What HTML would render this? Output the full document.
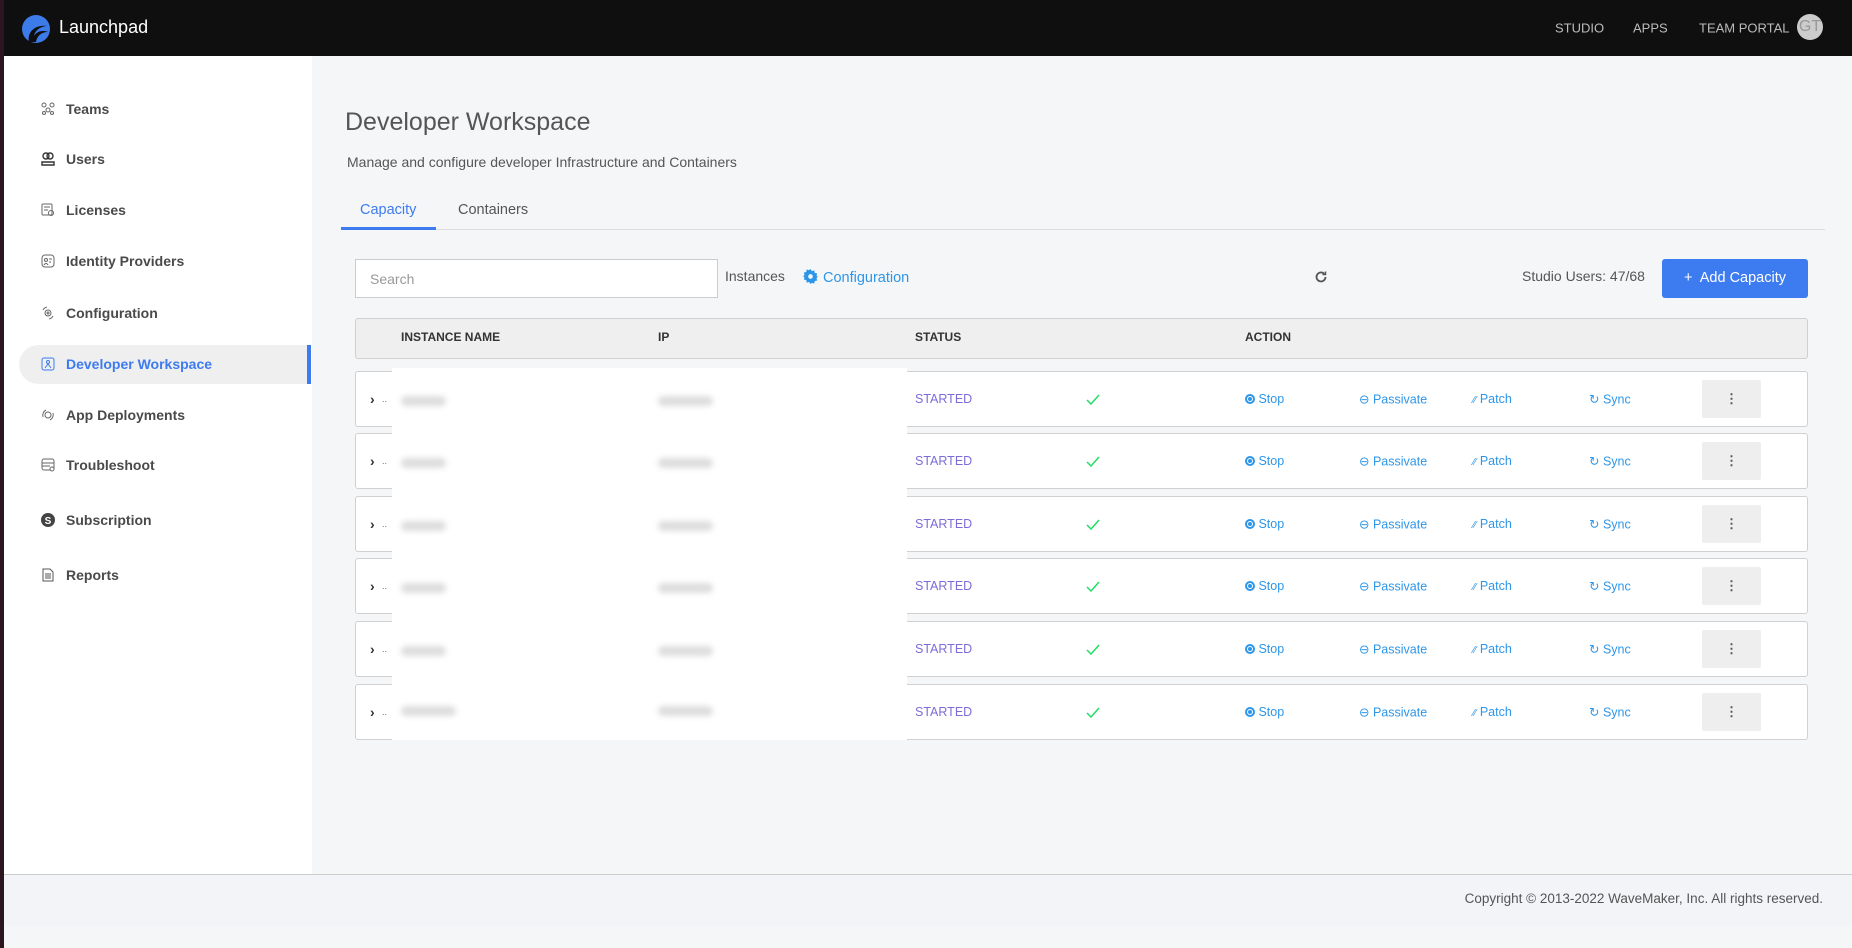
<!DOCTYPE html>
<html><head><meta charset="utf-8"><style>
*{box-sizing:border-box;margin:0;padding:0}
body{width:1852px;height:948px;overflow:hidden;background:#f5f6f8;font-family:"Liberation Sans",sans-serif;position:relative;color:#444}
.abs{position:absolute}
#top{left:0;top:0;width:1852px;height:56px;background:#0f0f0f}
#edge{left:0;top:0;width:4px;height:948px;background:#2a1520}
#side{left:4px;top:56px;width:308px;height:818px;background:#fff}
.nav{position:absolute;left:66px;font-size:14px;font-weight:bold;color:#4a4a4a;transform:translateY(-50%)}
.ic{position:absolute;left:41px;width:14px;height:14px;transform:translateY(-50%)}
.tn{position:absolute;top:28px;transform:translateY(-50%);font-size:13px;color:#bbb}
.hdr{position:absolute;top:337px;transform:translateY(-50%);font-size:12px;font-weight:bold;color:#333}
.row{position:absolute;left:355px;width:1453px;height:56px;background:#fff;border:1px solid #d0d0d0;border-radius:3px}
.c{position:absolute;top:50%;transform:translateY(-50%);font-size:12.5px}
.act{color:#2e96e8}
.blur{position:absolute;left:37px;width:515px;height:62px;top:-3px;background:#fff}
.bl{position:absolute;top:50%;transform:translateY(-50%);height:10px;background:#ddd;filter:blur(3px);border-radius:5px}
</style></head><body>
<div id="top" class="abs"></div>
<div id="edge" class="abs"></div>
<svg class="abs" style="left:21px;top:14px" width="30" height="30" viewBox="0 0 30 30"><circle cx="15" cy="15" r="14" fill="#3c7be8"/><path d="M8 28 C6 18 14 10 27 12 C20 12 14 16 13 22 C16 17 22 16 27 18 C20 18 16 22 15 28Z" fill="#0f0f0f"/></svg>
<div class="abs" style="left:59px;top:17px;font-size:18px;color:#fff">Launchpad</div>
<div class="tn" style="left:1555px">STUDIO</div>
<div class="tn" style="left:1633px">APPS</div>
<div class="tn" style="left:1699px">TEAM PORTAL</div>
<div class="abs" style="left:1797px;top:14px;width:26px;height:26px;border-radius:50%;background:#ccc;color:#999;font-size:16px;text-align:center;line-height:26px">GT</div>

<div id="side" class="abs"></div>
<div class="abs" style="left:19px;top:345px;width:292px;height:39px;background:#efefef;border-radius:20px 0 0 20px"></div>
<div class="abs" style="left:307px;top:345px;width:4px;height:39px;background:#3d7bf0"></div>
<svg class="ic" style="top:109px" viewBox="0 0 14 14" fill="none" stroke="#666"><circle cx="3" cy="3" r="2"/><circle cx="11" cy="3" r="2"/><circle cx="7" cy="8" r="2"/><circle cx="3" cy="11" r="1.5"/><circle cx="11" cy="11" r="1.5"/></svg>
<div class="nav" style="top:109px">Teams</div>
<svg class="ic" style="top:159px" viewBox="0 0 14 14" fill="none" stroke="#333" stroke-width="1.4"><circle cx="5" cy="4" r="3"/><circle cx="9" cy="4" r="3"/><path d="M1 13v-3h12v3z"/></svg>
<div class="nav" style="top:159px">Users</div>
<svg class="ic" style="top:210px" viewBox="0 0 14 14" fill="none" stroke="#666"><rect x="1" y="1" width="10" height="11" rx="1"/><path d="M3 4h6M3 7h4"/><circle cx="10" cy="10" r="2.5"/></svg>
<div class="nav" style="top:210px">Licenses</div>
<svg class="ic" style="top:261px" viewBox="0 0 14 14" fill="none" stroke="#666"><rect x="1" y="1" width="12" height="12" rx="3"/><circle cx="5" cy="6" r="1.5"/><path d="M8 5h3M8 8h2M3 11c1-2 3-2 4 0"/></svg>
<div class="nav" style="top:261px">Identity Providers</div>
<svg class="ic" style="top:313px" viewBox="0 0 14 14" fill="none" stroke="#666"><circle cx="7" cy="7" r="3"/><circle cx="7" cy="7" r="1"/><path d="M2 4a6 6 0 0 1 4-3M12 10a6 6 0 0 1-4 3"/></svg>
<div class="nav" style="top:313px">Configuration</div>
<svg class="ic" style="top:364px" viewBox="0 0 14 14" fill="none" stroke="#3d7bf0"><rect x="1" y="1" width="12" height="12" rx="2"/><circle cx="7" cy="5" r="1.5"/><path d="M4 11l3-4 3 4"/></svg>
<div class="nav" style="top:364px;color:#3d7bf0">Developer Workspace</div>
<svg class="ic" style="top:415px" viewBox="0 0 14 14" fill="none" stroke="#666"><circle cx="7" cy="7" r="3"/><path d="M2 9a6 6 0 0 1 3-7M12 5a6 6 0 0 1-3 7"/></svg>
<div class="nav" style="top:415px">App Deployments</div>
<svg class="ic" style="top:465px" viewBox="0 0 14 14" fill="none" stroke="#666"><rect x="1" y="1" width="12" height="11" rx="2"/><path d="M1 5h12M1 8h8"/><circle cx="11" cy="11" r="2" fill="#fff"/></svg>
<div class="nav" style="top:465px">Troubleshoot</div>
<svg class="ic" style="top:520px" viewBox="0 0 14 14"><circle cx="7" cy="7" r="7" fill="#444"/><text x="7" y="11" font-size="10" font-weight="bold" fill="#fff" text-anchor="middle" font-family="Liberation Sans">S</text></svg>
<div class="nav" style="top:520px">Subscription</div>
<svg class="ic" style="top:575px" viewBox="0 0 14 14" fill="none" stroke="#555"><path d="M2 1h7l3 3v9H2z"/><path d="M4 6h6M4 8h6M4 10h6"/></svg>
<div class="nav" style="top:575px">Reports</div>

<div class="abs" style="left:345px;top:108px;font-size:25px;color:#555">Developer Workspace</div>
<div class="abs" style="left:347px;top:154px;font-size:14px;color:#555">Manage and configure developer Infrastructure and Containers</div>
<div class="abs" style="left:360px;top:202px;font-size:14.5px;color:#3d7bf0">Capacity</div>
<div class="abs" style="left:458px;top:202px;font-size:14.5px;color:#555">Containers</div>
<div class="abs" style="left:341px;top:229px;width:1484px;height:1px;background:#ddd"></div>
<div class="abs" style="left:341px;top:227px;width:95px;height:3px;background:#3d7bf0"></div>

<div class="abs" style="left:355px;top:259px;width:363px;height:39px;background:#fff;border:1px solid #ccc"></div>
<div class="abs" style="left:370px;top:271px;font-size:14px;color:#999">Search</div>
<div class="abs" style="left:725px;top:268px;font-size:14px;color:#555">Instances</div>
<svg class="abs" style="left:803px;top:269px" width="15" height="15" viewBox="0 0 16 16"><path fill="#2e96e8" d="M8 0l1.5 2.2 2.6-.7.4 2.6 2.6.7-.7 2.6L16 8l-1.6 1.6.7 2.6-2.6.7-.4 2.6-2.6-.7L8 16l-1.5-2.2-2.6.7-.4-2.6-2.6-.7.7-2.6L0 8l1.6-1.6-.7-2.6 2.6-.7.4-2.6 2.6.7z"/><circle cx="8" cy="8" r="2.5" fill="#f5f6f8"/></svg>
<div class="abs" style="left:823px;top:270px;font-size:14.5px;color:#2e96e8">Configuration</div>
<svg class="abs" style="left:1314px;top:270px" width="14" height="14" viewBox="0 0 14 14" fill="none" stroke="#555" stroke-width="1.8"><path d="M11.5 7a4.5 4.5 0 1 1-1.3-3.2"/><path d="M11.5 1.5v3h-3" stroke-width="1.5"/></svg>
<div class="abs" style="left:1522px;top:268px;font-size:14px;color:#555">Studio Users: 47/68</div>
<div class="abs" style="left:1662px;top:259px;width:146px;height:39px;background:#3d7bf0;border-radius:3px;color:#fff;font-size:14.5px;line-height:39px;text-align:center">+&nbsp; Add Capacity</div>

<div class="abs" style="left:355px;top:318px;width:1453px;height:41px;background:#efefef;border:1px solid #d0d0d0;border-radius:3px"></div>
<div class="hdr" style="left:401px">INSTANCE NAME</div>
<div class="hdr" style="left:658px">IP</div>
<div class="hdr" style="left:915px">STATUS</div>
<div class="hdr" style="left:1245px">ACTION</div>

<div class="row" style="top:371px"></div>
<div class="row" style="top:433px"></div>
<div class="row" style="top:496px"></div>
<div class="row" style="top:558px"></div>
<div class="row" style="top:621px"></div>
<div class="row" style="top:684px"></div>

<div id="rows"></div>
<script>
var tops=[371,433,496,558,621,684],h='';
tops.forEach(function(t,i){
h+='<div class="abs" style="left:355px;top:'+t+'px;width:1453px;height:56px">'+
'<div class="c" style="left:15px;font-size:14px;color:#333;font-weight:bold">&#8250;</div>'+
'<div class="c" style="left:27px;font-size:9px;color:#666">..</div>'+
'<div class="blur" style="height:'+(i==5?59:65)+'px"><div class="bl" style="left:9px;width:'+(i==5?55:45)+'px"></div><div class="bl" style="left:266px;width:55px"></div></div>'+
'<div class="c" style="left:560px;color:#7b6cd9">STARTED</div>'+
'<svg class="c" style="left:731px" width="14" height="12" viewBox="0 0 14 12"><path d="M1 7l4 4 8-9" fill="none" stroke="#22dd66" stroke-width="1.5"/></svg>'+
'<div class="c act" style="left:890px"><span style="display:inline-block;width:10px;height:10px;border:2px solid #2e96e8;border-radius:50%;padding:1px;vertical-align:-1px"><span style="display:block;width:4px;height:4px;background:#2e96e8;border-radius:50%"></span></span> Stop</div>'+
'<div class="c act" style="left:1004px">&#8854; Passivate</div>'+
'<div class="c act" style="left:1118px"><span style="font-size:10px">&#8260;&#8260;</span> Patch</div>'+
'<div class="c act" style="left:1234px">&#8635; Sync</div>'+
'<div class="abs" style="left:1347px;top:9px;width:59px;height:38px;background:#eee;border-radius:2px;text-align:center;line-height:38px;font-size:13px;color:#555;font-weight:bold">&#8942;</div>'+
'</div>';});
document.getElementById('rows').innerHTML=h;
</script>

<div class="abs" style="left:4px;top:874px;width:1848px;height:1px;background:#ccc"></div>
<div class="abs" style="left:4px;top:875px;width:1848px;height:51px;background:#f3f4f7"></div>
<div class="abs" style="right:29px;top:891px;font-size:13.5px;color:#555">Copyright © 2013-2022 WaveMaker, Inc. All rights reserved.</div>
</body></html>
